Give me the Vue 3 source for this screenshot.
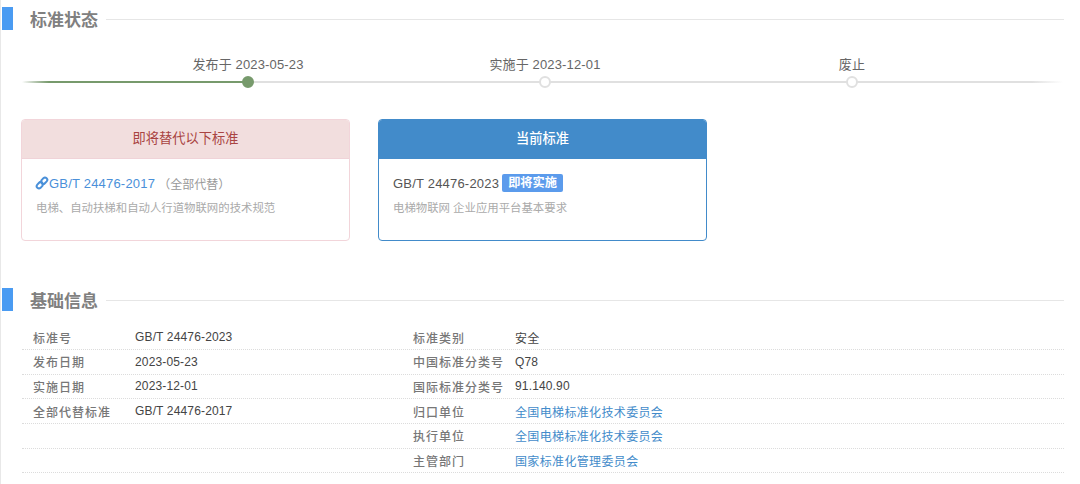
<script setup>
const steps = [
  { label: '发布于 2023-05-23', done: true },
  { label: '实施于 2023-12-01', done: false },
  { label: '废止', done: false }
]
const rows = [
  ['标准号', 'GB/T 24476-2023', '标准类别', '安全', false],
  ['发布日期', '2023-05-23', '中国标准分类号', 'Q78', false],
  ['实施日期', '2023-12-01', '国际标准分类号', '91.140.90', false],
  ['全部代替标准', 'GB/T 24476-2017', '归口单位', '全国电梯标准化技术委员会', true],
  ['', '', '执行单位', '全国电梯标准化技术委员会', true],
  ['', '', '主管部门', '国家标准化管理委员会', true]
]
</script>

<template>
  <div class="page">
    <section class="heading">
      <span class="bar"></span>
      <h2>标准状态</h2>
      <span class="rule"></span>
    </section>

    <div class="timeline">
      <div class="track"></div>
      <div class="track-done"></div>
      <div v-for="(s, i) in steps" :key="i" class="step" :class="['s' + i, { done: s.done }]">
        <span class="step-label">{{ s.label }}</span>
        <span class="dot"></span>
      </div>
    </div>

    <div class="cards">
      <div class="card old">
        <div class="card-head">即将替代以下标准</div>
        <div class="card-body">
          <div class="card-title">
            <svg class="chain" viewBox="0 0 14 14" width="14" height="14" fill="none" stroke="#4a90d9" stroke-width="2" stroke-linecap="round">
              <path d="M6.4 4.4 8.4 2.2a2.3 2.3 0 0 1 3.3 3.2L9.9 7.3a2.3 2.3 0 0 1-3.2.2" />
              <path d="M7.6 9.6 5.6 11.8a2.3 2.3 0 0 1-3.3-3.2l1.8-1.9a2.3 2.3 0 0 1 3.2-.2" />
            </svg>
            <a class="link">GB/T 24476-2017</a>
            <span class="note">（全部代替）</span>
          </div>
          <p class="desc">电梯、自动扶梯和自动人行道物联网的技术规范</p>
        </div>
      </div>
      <div class="card current">
        <div class="card-head">当前标准</div>
        <div class="card-body">
          <div class="card-title">
            <span class="code">GB/T 24476-2023</span>
            <span class="badge">即将实施</span>
          </div>
          <p class="desc">电梯物联网 企业应用平台基本要求</p>
        </div>
      </div>
    </div>

    <section class="heading second">
      <span class="bar"></span>
      <h2>基础信息</h2>
      <span class="rule"></span>
    </section>

    <div class="info">
      <div v-for="(r, i) in rows" :key="i" class="row">
        <span class="k k1">{{ r[0] }}</span>
        <span class="v v1">{{ r[1] }}</span>
        <span class="k k2">{{ r[2] }}</span>
        <span class="v v2" :class="{ blue: r[4] }">{{ r[3] }}</span>
      </div>
    </div>
  </div>
</template>

<style>
html, body { margin: 0; background: #fff; overflow: hidden; }
</style>

<style scoped>
.page {
  width: 1079px;
  height: 484px;
  box-sizing: border-box;
  border-left: 1px solid #e8e8e8;
  padding-top: 7px;
  font-family: "Liberation Sans", "Noto Sans CJK SC", sans-serif;
  font-size: 12px;
  color: #444;
  overflow: hidden;
}
.heading {
  display: flex;
  align-items: center;
  height: 23px;
  padding-left: 1px;
  padding-right: 15px;
}
.bar { width: 11px; height: 23px; background: #4a9bf2; flex: none; }
.heading h2 {
  margin: 4px 0 0 17px;
  font-size: 17px;
  line-height: 25px;
  font-weight: 700;
  color: #808080;
  flex: none;
}
.rule { flex: 1; height: 1px; background: #e6e6e6; margin: 2px 0 0 8px; }
.second { margin-top: 47px; }

.timeline { position: relative; height: 59px; margin: 0 0 0 21px; width: 1041px; }
.track {
  position: absolute; left: 0; right: 0; top: 51px; height: 2px;
  background: linear-gradient(90deg, transparent, #e0e0e0 3%, #e0e0e0 97%, transparent);
}
.track-done {
  position: absolute; left: 0; width: 226px; top: 51px; height: 2px;
  background: linear-gradient(90deg, transparent, #779a6c 12%);
}
.step { position: absolute; top: 0; width: 0; display: flex; flex-direction: column; align-items: center; }
.s0 { left: 226px; }
.s1 { left: 523px; }
.s2 { left: 830px; }
.step-label {
  position: absolute; top: 26px; white-space: nowrap; font-size: 13px; line-height: 18px;
  color: #666; letter-spacing: 0.15px;
}
.dot {
  position: absolute; top: 46px; width: 12px; height: 12px; box-sizing: border-box;
  border-radius: 50%; background: #fff; border: 2px solid #e0e0e0;
}
.done .dot { background: #779a6c; border-color: #779a6c; }

.cards { display: flex; gap: 28px; margin: 30px 0 0 20px; }
.card {
  width: 329px; height: 122px; box-sizing: border-box;
  border: 1px solid; border-radius: 4px; overflow: hidden;
}
.card-head {
  height: 39px; line-height: 38px; text-align: center; font-size: 13.25px; box-sizing: border-box;
  border-bottom: 1px solid;
}
.old { border-color: #f2d5da; }
.old .card-head { background: #f2dede; color: #a94442; border-color: #f0d3d8; }
.current { border-color: #428bca; }
.current .card-head { background: #428bca; color: #fff; border-color: #428bca; font-weight: 500; }
.card-body { padding: 15px 14px 0; }
.card-title { display: flex; align-items: center; height: 18px; font-size: 13px; letter-spacing: 0.2px; white-space: nowrap; }
.chain { flex: none; margin-left: -1px; }
.link { color: #4a90d9; }
.note { color: #999; font-size: 12px; margin-left: 3px; letter-spacing: 0; }
.code { color: #555; }
.badge {
  margin-left: 3px; background: #5b9bec; color: #fff; font-size: 12.2px; font-weight: 700; letter-spacing: 0;
  padding: 0 6px; height: 18px; line-height: 18px; border-radius: 2px;
}
.desc { margin: 8px 0 0; font-size: 11.4px; line-height: 16px; color: #aaa; }

.info { margin: 14.4px 0 0 21px; width: 1042px; }
.row {
  display: grid;
  grid-template-columns: 102px 278px 102px 1fr;
  height: 24.65px;
  box-sizing: border-box;
  align-items: center;
  border-bottom: 1px dotted #dcdcdc;
  padding-left: 11px;
  white-space: nowrap;
}
.k { font-weight: 500; color: #777; letter-spacing: 1px; }
.v { color: #444; letter-spacing: 0.15px; }
.blue { color: #428bca; letter-spacing: 0.35px; }
</style>
